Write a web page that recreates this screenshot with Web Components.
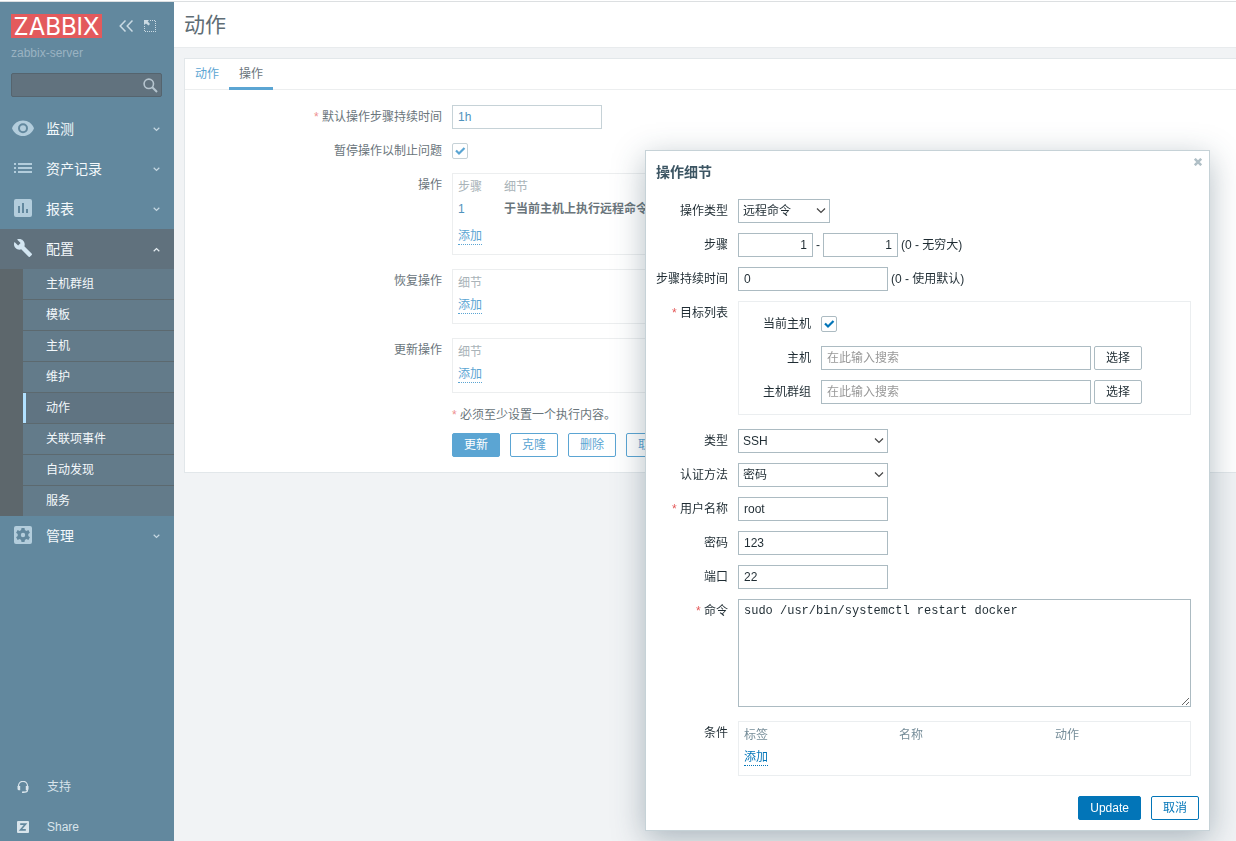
<!DOCTYPE html>
<html lang="zh-CN">
<head>
<meta charset="utf-8">
<title>动作</title>
<style>
  body {
    margin: 0;
    background: #f1f3f5;
    color: #6a757b;
    font: 12px/24px "Liberation Sans", "Noto Sans CJK SC", sans-serif;
    --link: #5ba5d3;
    --muted: #a9b3b8;
    --control-border: #c6d2d7;
    --control-text: #4f93bd;
    --frame: #eceeef;
    --button-text: #5ba5d3;
  }
</style>
</head>
<body>
<zbx-app></zbx-app>

<script>
const controls = `
  *, *::before, *::after { box-sizing: border-box; }
  a { color: var(--link); text-decoration: none; }
  a[aria-current] { color: inherit; }
  a.add { display: inline-block; line-height: 16px; border-bottom: 1px dotted var(--link); }
  input[type=text], select, textarea {
    margin: 0; height: 24px; border: 1px solid var(--control-border); border-radius: 0;
    background-color: #fff; color: var(--control-text); font: inherit; line-height: 22px; padding: 0 5px; outline: none;
  }
  input[type=text] { width: 150px; }
  input::placeholder { color: #999; opacity: 1; }
  select {
    appearance: none; padding: 0 20px 0 4px; width: 150px;
    background-repeat: no-repeat; background-position: right 3px center;
    background-image: url("data:image/svg+xml,%3Csvg xmlns='http://www.w3.org/2000/svg' width='10' height='8'%3E%3Cpath d='M1 1.5l4 4 4-4' fill='none' stroke='%23444' stroke-width='1.2'/%3E%3C/svg%3E");
  }
  input[type=checkbox] {
    appearance: none; margin: 0; width: 16px; height: 16px; display: block;
    border: 1px solid var(--control-border); border-radius: 2px; background: #fff center no-repeat;
  }
  input[type=checkbox]:checked { background-image: var(--check); }
  button {
    height: 24px; padding: 0 11px; border: 1px solid var(--link); border-radius: 2px;
    background: #fff; color: var(--button-text); font: inherit; line-height: 22px; cursor: pointer;
  }
  button.primary { background: var(--link); color: #fff; }
  .required::before { content: "* "; color: var(--required, #ee9090); }
  .frame { border: 1px solid var(--frame); }
  table { border-collapse: collapse; width: 100%; line-height: 16px; }
  th, td { height: 22px; padding: 3px 5px; text-align: left; font-weight: 400; }
  th { color: var(--muted); }
`;

function component(name, css, html) {
  const template = document.createElement('template');
  template.innerHTML = `<style>${css}</style>${html}`;
  customElements.define(name, class extends HTMLElement {
    constructor() {
      super();
      this.attachShadow({ mode: 'open' }).append(template.content.cloneNode(true));
    }
  });
}

/* Label column plus field column */
component('form-row', `
  :host { display: grid; grid-template-columns: var(--label-width) minmax(0, 1fr); column-gap: 10px; align-items: start; }
  .label { text-align: right; white-space: nowrap; min-height: 24px; }
  .field { min-height: 24px; display: flex; align-items: center; gap: 3px; }
`, `<div class="label"><slot name="label"></slot></div><div class="field"><slot></slot></div>`);

/* Main menu entry with an icon and a chevron */
component('menu-item', `
  :host { display: block; color: #f3f8fb; }
  a { display: flex; align-items: center; gap: 12px; height: 40px; padding: 0 14px 0 12px; color: inherit; text-decoration: none; font-size: 14px; }
  .icon { width: 22px; height: 22px; color: #b3cddc; }
  ::slotted(svg) { display: block; width: 22px; height: 22px; }
  .text { flex: 1; }
  .arrow { color: #c5d7e1; width: 7px; height: 5px; }
  :host([open]) a { background: #60717d; }
  :host([open]) .icon { color: #d3e6f2; }
  :host([open]) .arrow { transform: rotate(180deg); color: #e6eef3; }
`, `
  <a href="#">
    <span class="icon"><slot name="icon"></slot></span>
    <span class="text"><slot></slot></span>
    <svg class="arrow" viewBox="0 0 7 5"><path d="M.7.8L3.5 3.500 6.300.8" fill="none" stroke="currentColor" stroke-width="1.200"/></svg>
  </a>
  <slot name="submenu"></slot>
`);

component('sub-menu', `
  :host { display: block; padding-left: 23px; background: #5d676c; }
  nav { background: #637b8a; }
`, `<nav><slot></slot></nav>`);

component('sub-item', `
  :host { display: block; border-bottom: 1px solid #5c696f; }
  :host(:last-child) { border-bottom: 0; }
  a { display: block; height: 30px; line-height: 30px; padding-left: 20px; border-left: 3px solid transparent; color: #f3f8fb; text-decoration: none; }
  :host([selected]) a { background: #607482; border-left-color: #b2e1ff; }
`, `<a href="#"><slot></slot></a>`);

component('side-bar', `
  *, *::before { box-sizing: border-box; }
  :host { display: flex; flex-direction: column; flex: none; width: 174px; background: #62889e; padding-top: 12px; box-sizing: border-box; }
  header { padding: 0 12px 0 11px; margin-bottom: 12px; }
  .brand { display: flex; align-items: center; }
  .logo { width: 91px; height: 24px; background: #e35a5c; color: #fff; font: 24px/25px Inter, sans-serif; text-align: center; text-decoration: none; white-space: nowrap; }
  .brand button { background: none; border: 0; padding: 0; height: 12px; color: #cbdbe4; }
  .brand button svg { display: block; }
  .collapse { margin-left: 17px; }
  .kiosk { margin-left: 11px; }
  .server { margin-top: 5px; line-height: 20px; color: #9ab3c2; }
  form { margin: 10px 0 0; display: flex; align-items: center; height: 24px; background: #61727e; border: 1px solid #55646e; border-radius: 2px; padding-right: 3px; }
  form input { flex: 1; min-width: 0; height: 22px; border: 0; background: none; color: #fff; font: inherit; outline: none; padding: 0 5px; }
  form button { border: 0; padding: 0; background: none; color: #b6c5cf; height: 15px; }
  form svg { display: block; }
  .links { margin-top: auto; display: grid; gap: 12px; }
  .links a { display: flex; align-items: center; gap: 18px; height: 28px; padding-left: 17px; color: #d8e4eb; text-decoration: none; }
`, `
  <header>
    <div class="brand">
      <a class="logo" href="#">ZABBIX</a>
      <button class="collapse" aria-label="隐藏侧边栏"><svg width="14" height="12" viewBox="0 0 14 12" fill="none" stroke="currentColor" stroke-width="1.500"><path d="M6.500.5L1.200 6l5.300 5.500M13.500.5L8.200 6l5.300 5.500"/></svg></button>
      <button class="kiosk" aria-label="全屏"><svg width="12" height="12" viewBox="0 0 12 12"><path d="M6 0h1v1H6zM8 0h1v1H8zM10 0h1v1h-1zM11 1h1v1h-1zM11 3h1v1h-1zM11 5h1v1h-1zM11 7h1v1h-1zM11 9h1v1h-1zM11 11h1v1h-1zM9 11h1v1H9zM7 11h1v1H7zM5 11h1v1H5zM3 11h1v1H3zM1 11h1v1H1zM0 10h1v1H0zM0 8h1v1H0zM0 6h1v1H0z" fill="currentColor"/><path d="M0 0h5L3.700 1.500 6 4 4.500 5.500 2 3.500 0 5z" fill="currentColor"/></svg></button>
    </div>
    <div class="server">zabbix-server</div>
    <form role="search">
      <input type="text" aria-label="搜索">
      <button type="button" aria-label="搜索"><svg width="15" height="15" viewBox="0 0 15 15" fill="none" stroke="currentColor"><circle cx="5.800" cy="5.800" r="4.700" stroke-width="1.600"/><path d="M9.300 9.300L14 14" stroke-width="2"/></svg></button>
    </form>
  </header>
  <nav>
    <menu-item><svg slot="icon" viewBox="0 0 22 22"><path fill="currentColor" fill-rule="evenodd" d="M11 2.500C6 2.500 1.800 5.600 0 10.200 1.800 14.900 6 18 11 18s9.200-3.100 11-7.800C20.200 5.600 16 2.500 11 2.500zm0 12.800a5 5 0 1 1 0-10 5 5 0 0 1 0 10zm0-2a3 3 0 1 0 0-6 3 3 0 0 0 0 6z"/></svg>监测</menu-item>
    <menu-item><svg slot="icon" viewBox="0 0 22 22"><path fill="currentColor" d="M2 5h2v2H2zM6 5h14v2H6zM2 9h2v2H2zM6 9h14v2H6zM2 13h2v2H2zM6 13h14v2H6z"/></svg>资产记录</menu-item>
    <menu-item><svg slot="icon" viewBox="0 0 22 22"><path fill="currentColor" fill-rule="evenodd" d="M4 1h14a2 2 0 0 1 2 2v14a2 2 0 0 1-2 2H4a2 2 0 0 1-2-2V3a2 2 0 0 1 2-2zm2 7v7h2V8zm4-3v10h2V5zm4 6v4h2v-4z"/></svg>报表</menu-item>
    <menu-item open><svg slot="icon" viewBox="0 0 22 22"><path fill="currentColor" transform="translate(1.200 .2) scale(.82)" d="M22.700 19l-9.100-9.100c.9-2.300.4-5-1.500-6.900-2-2-5-2.400-7.400-1.300L9 6 6 9 1.600 4.700C.4 7.100.9 10.100 2.900 12.100c1.900 1.900 4.600 2.400 6.900 1.500l9.100 9.100c.4.4 1 .4 1.400 0l2.300-2.300c.5-.4.5-1.100.1-1.400z"/></svg>配置
      <sub-menu slot="submenu">
        <sub-item>主机群组</sub-item>
        <sub-item>模板</sub-item>
        <sub-item>主机</sub-item>
        <sub-item>维护</sub-item>
        <sub-item selected>动作</sub-item>
        <sub-item>关联项事件</sub-item>
        <sub-item>自动发现</sub-item>
        <sub-item>服务</sub-item>
      </sub-menu>
    </menu-item>
    <menu-item><svg slot="icon" viewBox="0 0 22 22"><rect x="2" y="1" width="18" height="18" rx="2" fill="currentColor"/><path fill="#62889e" fill-rule="evenodd" d="M9.500 3h3l.4 2 1.500.9 2-.8 1.500 2.600-1.600 1.400v1.800l1.600 1.400-1.500 2.600-2-.8-1.500.9-.4 2h-3l-.4-2-1.500-.9-2 .8-1.500-2.600 1.600-1.400V9.100L4.100 7.700l1.500-2.600 2 .8 1.500-.9zM11 7.800a2.200 2.200 0 1 0 0 4.400 2.200 2.200 0 0 0 0-4.400z"/></svg>管理</menu-item>
  </nav>
  <div class="links">
    <a href="#"><svg width="12" height="13" viewBox="0 0 12 13"><path d="M1.500 6V4.800a4.500 4.500 0 0 1 9 0V9Q10.500 11 8 11.200H6.500" fill="none" stroke="currentColor" stroke-width="1.200"/><path fill="currentColor" d="M.5 5h2.700v4.300H2A1.500 1.500 0 0 1 .5 7.800zM8.800 5h2.700v2.800A1.500 1.500 0 0 1 10 9.300H8.800zM5 10.400h2.400V12H5z"/></svg>支持</a>
    <a href="#"><svg width="12" height="12" viewBox="0 0 12 12"><rect width="12" height="12" rx="1" fill="currentColor"/><path d="M3.200 3.200h5.300L3.600 8.800h5.200" fill="none" stroke="#62889e" stroke-width="1.700"/></svg>Share</a>
  </div>
`);

component('page-header', `
  :host { display: block; background: #fff; border-bottom: 1px solid #e8ebed; padding: 0 10px; }
  h1 { margin: 0; font-size: 21px; line-height: 45px; font-weight: 400; color: #5f6d75; }
`, `<h1><slot></slot></h1>`);

component('tab-bar', `
  :host { display: flex; border-bottom: 1px solid #eceeef; height: 31px; box-sizing: border-box; }
  ::slotted(a) { height: 31px; box-sizing: border-box; padding: 0 10px; line-height: 30px; }
  ::slotted(a[aria-current]) { border-bottom: 3px solid #5ba5d3; }
`, `<slot></slot>`);

component('action-panel', `${controls}
  :host {
    display: block; margin: 10px 0 0 10px; background: #fff; border: 1px solid #e2e7ea; border-right: 0; box-sizing: border-box;
    --label-width: 257px;
    --check: url("data:image/svg+xml,%3Csvg xmlns='http://www.w3.org/2000/svg' width='12' height='10'%3E%3Cpath d='M2 4.500l3 3 5.500-5.500' fill='none' stroke='%235ba5d3' stroke-width='2.200'/%3E%3C/svg%3E");
  }
  form { display: grid; gap: 10px; padding: 15px 0; }
  .frame { width: 100%; max-width: 650px; padding: 2px 0; margin-bottom: 4px; }
  .short { padding-bottom: 6px; }
  .steps th:first-child { width: 46px; }
  .steps tr:last-child td { height: 32px; }
  .step { color: var(--control-text); }
  .buttons { display: flex; gap: 10px; }
  .end { margin-top: -4px; }
`, `
  <tab-bar><a href="#">动作</a><a href="#" aria-current="page">操作</a></tab-bar>
  <form>
    <form-row><label slot="label" class="required" for="period">默认操作步骤持续时间</label><input type="text" id="period" value="1h"></form-row>
    <form-row><label slot="label" for="pause">暂停操作以制止问题</label><input type="checkbox" id="pause" checked></form-row>
    <form-row><span slot="label">操作</span>
      <div class="frame"><table class="steps">
        <tr><th>步骤</th><th>细节</th></tr>
        <tr><td class="step">1</td><td><b>于当前主机上执行远程命令</b></td></tr>
        <tr><td colspan="2"><a class="add" href="#">添加</a></td></tr>
      </table></div>
    </form-row>
    <form-row><span slot="label">恢复操作</span>
      <div class="frame short"><table><tr><th>细节</th></tr><tr><td><a class="add" href="#">添加</a></td></tr></table></div>
    </form-row>
    <form-row><span slot="label">更新操作</span>
      <div class="frame short"><table><tr><th>细节</th></tr><tr><td><a class="add" href="#">添加</a></td></tr></table></div>
    </form-row>
    <form-row class="end"><span class="required">必须至少设置一个执行内容。</span></form-row>
    <form-row class="end">
      <div class="buttons"><button type="button" class="primary">更新</button><button type="button">克隆</button><button type="button">删除</button><button type="button">取消</button></div>
    </form-row>
  </form>
`);

component('operation-dialog', `${controls}
  :host {
    display: block; position: fixed; top: 150px; right: 26px; width: 565px; box-sizing: border-box; padding: 10px;
    background: #fff; border: 1px solid #c6d2d7; box-shadow: 0 8px 30px rgba(40, 70, 85, .35); color: #1f2c33;
    --label-width: 72px; --link: #0275b8; --muted: #768d99; --control-border: #acbbc2; --control-text: #1f2c33;
    --frame: #ebeef0; --button-text: #0275b8; --required: #e45959;
    --check: url("data:image/svg+xml,%3Csvg xmlns='http://www.w3.org/2000/svg' width='12' height='10'%3E%3Cpath d='M2 4.500l3 3 5.500-5.500' fill='none' stroke='%230275b8' stroke-width='2.200'/%3E%3C/svg%3E");
  }
  h2 { margin: 0 0 16px; font-size: 14px; line-height: 22px; color: #3c5563; }
  .close { position: absolute; top: 6px; right: 6px; width: 10px; height: 10px; padding: 1px; border: 0; color: #b0bfc6; }
  .close svg { display: block; }
  form { display: grid; gap: 10px; padding-right: 8px; }
  #type { width: 92px; }
  #from, #to { width: 75px; text-align: right; }
  .frame { width: 100%; margin-bottom: 4px; }
  .targets { --label-width: 72px; display: grid; gap: 10px; padding: 10px 0; }
  .targets input[type=text] { width: 270px; }
  .targets button { border-color: var(--control-border); color: #1f2c33; }
  textarea { width: 100%; height: 108px; padding: 3px 5px; margin-bottom: 4px; font: 12px/16px "Liberation Mono", monospace; resize: vertical; }
  .conditions { padding: 2px 0 6px; }
  .conditions table { table-layout: fixed; }
  .conditions th:first-child { width: 155px; }
  .conditions th:nth-child(2) { width: 156px; }
  footer { display: flex; justify-content: flex-end; gap: 10px; margin-top: 16px; }
`, `
  <button type="button" class="close" aria-label="关闭"><svg width="8" height="8" viewBox="0 0 8 8"><path d="M.8.8l6.400 6.400M7.200.8L.8 7.200" stroke="currentColor" stroke-width="2.500"/></svg></button>
  <h2>操作细节</h2>
  <form>
    <form-row><label slot="label" for="type">操作类型</label><select id="type"><option>远程命令</option></select></form-row>
    <form-row><label slot="label" for="from">步骤</label><input type="text" id="from" value="1"><span>-</span><input type="text" id="to" value="1" aria-label="步骤"><span>(0 - 无穷大)</span></form-row>
    <form-row><label slot="label" for="duration">步骤持续时间</label><input type="text" id="duration" value="0"><span>(0 - 使用默认)</span></form-row>
    <form-row><span slot="label" class="required">目标列表</span>
      <div class="frame targets">
        <form-row><label slot="label" for="current">当前主机</label><input type="checkbox" id="current" checked></form-row>
        <form-row><label slot="label" for="host">主机</label><input type="text" id="host" placeholder="在此输入搜索"><button type="button">选择</button></form-row>
        <form-row><label slot="label" for="group">主机群组</label><input type="text" id="group" placeholder="在此输入搜索"><button type="button">选择</button></form-row>
      </div>
    </form-row>
    <form-row><label slot="label" for="kind">类型</label><select id="kind"><option>SSH</option></select></form-row>
    <form-row><label slot="label" for="auth">认证方法</label><select id="auth"><option>密码</option></select></form-row>
    <form-row><label slot="label" class="required" for="user">用户名称</label><input type="text" id="user" value="root"></form-row>
    <form-row><label slot="label" for="pass">密码</label><input type="text" id="pass" value="123"></form-row>
    <form-row><label slot="label" for="port">端口</label><input type="text" id="port" value="22"></form-row>
    <form-row><label slot="label" class="required" for="command">命令</label><textarea id="command" spellcheck="false">sudo /usr/bin/systemctl restart docker</textarea></form-row>
    <form-row><span slot="label">条件</span>
      <div class="frame conditions"><table>
        <tr><th>标签</th><th>名称</th><th>动作</th></tr>
        <tr><td colspan="3"><a class="add" href="#">添加</a></td></tr>
      </table></div>
    </form-row>
  </form>
  <footer><button type="button" class="primary">Update</button><button type="button">取消</button></footer>
`);

component('zbx-app', `
  :host { display: flex; flex-direction: column; min-height: 100vh; box-sizing: border-box; background: #fff; padding-top: 1px; }
  .page { flex: 1; display: flex; border-top: 1px solid #dcdfe1; }
  main { flex: 1; min-width: 0; background: #f1f3f5; }
`, `
  <div class="page">
    <side-bar></side-bar>
    <main>
      <page-header>动作</page-header>
      <action-panel></action-panel>
    </main>
  </div>
  <operation-dialog role="dialog" aria-label="操作细节"></operation-dialog>
`);
</script>
</body>
</html>
